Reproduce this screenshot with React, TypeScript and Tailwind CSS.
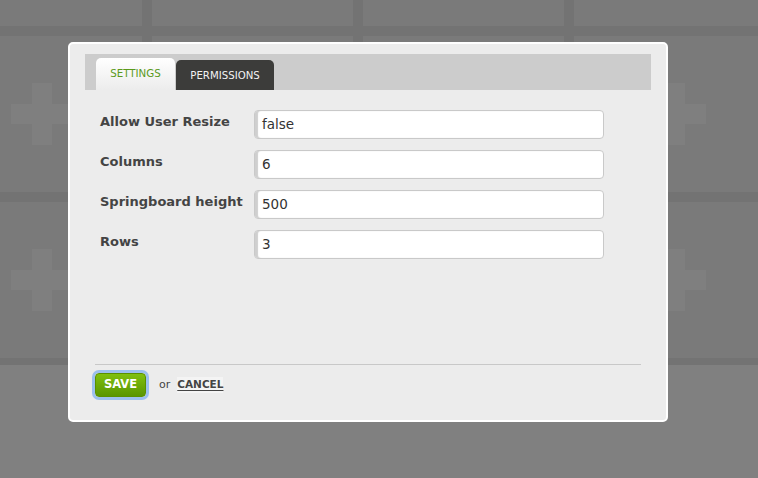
import React from "react";

const font = { fontFamily: '"DejaVu Sans", "Liberation Sans", sans-serif' };

function Plus() {
  return (
    <svg width="62" height="62" viewBox="0 0 62 62">
      <rect x="21" y="0" width="20" height="62" fill="#7f7f7f" />
      <rect x="0" y="21" width="62" height="20" fill="#7f7f7f" />
    </svg>
  );
}

const fields = [
  { label: "Allow User Resize", value: "false" },
  { label: "Columns", value: "6" },
  { label: "Springboard height", value: "500" },
  { label: "Rows", value: "3" },
];

export default function App() {
  return (
    <div className="relative w-[758px] h-[478px] overflow-hidden bg-[#808080]" style={font}>
      <div className="-mt-[130px] bg-[#737373] pb-[7px]">
        <div className="-ml-[59px] flex flex-col gap-[10px]">
          {[0, 1, 2].map((r) => (
            <div key={r} className="flex gap-[10px]">
              {[0, 1, 2, 3].map((c) => (
                <div
                  key={c}
                  className="flex h-[156px] w-[201px] shrink-0 items-center justify-center bg-[#7a7a7a]"
                >
                  <Plus />
                </div>
              ))}
            </div>
          ))}
        </div>
      </div>

      <div className="absolute left-[68px] top-[42px] flex h-[380px] w-[600px] flex-col rounded-[5px] border-2 border-white bg-[#ececec] px-[15px] pt-[10px] pb-[23px]">
        <div className="flex h-[36px] items-end gap-[1px] bg-[#cccccc] pl-[11px]">
          <div className="flex h-[32px] w-[79px] items-center justify-center rounded-t-[5px] bg-gradient-to-b from-white to-[#ececec] text-[10.3px] text-[#5b9a1c]">
            SETTINGS
          </div>
          <div className="flex h-[30px] w-[98px] items-center justify-center rounded-t-[5px] bg-[#3c3c3a] pt-[1px] text-[10.2px] text-[#f2f2f2]">
            PERMISSIONS
          </div>
        </div>

        <div className="flex flex-1 flex-col gap-[11px] pt-[20px] pl-[15px]">
          {fields.map((f) => (
            <div key={f.label} className="flex items-start">
              <div className="w-[154px] pt-[4px] text-[13px] font-bold leading-[16px] text-[#444444]">
                {f.label}
              </div>
              <div className="flex h-[29px] w-[350px] items-center rounded-[4px] border border-[#c9c9c9] bg-white pl-[7px] text-[13.5px] text-[#333333] shadow-[inset_3px_0_1px_#cfcfcf]">
                {f.value}
              </div>
            </div>
          ))}
        </div>

        <div className="mx-[10px] flex items-center border-t border-[#c8c8c8] pt-[8px]">
          <div className="flex h-[24px] w-[51px] items-center justify-center rounded-[4px] border border-[#5a9000] bg-gradient-to-b from-[#80c010] to-[#5a9602] text-[11.5px] font-bold text-white ring-[3px] ring-[#9cc0ee]">
            SAVE
          </div>
          <span className="ml-[13px] text-[11px] text-[#444444]">or</span>
          <span className="ml-[7px] bg-[#f4f4f4] text-[10.5px] font-bold text-[#444444] underline underline-offset-2">
            CANCEL
          </span>
        </div>
      </div>
    </div>
  );
}
